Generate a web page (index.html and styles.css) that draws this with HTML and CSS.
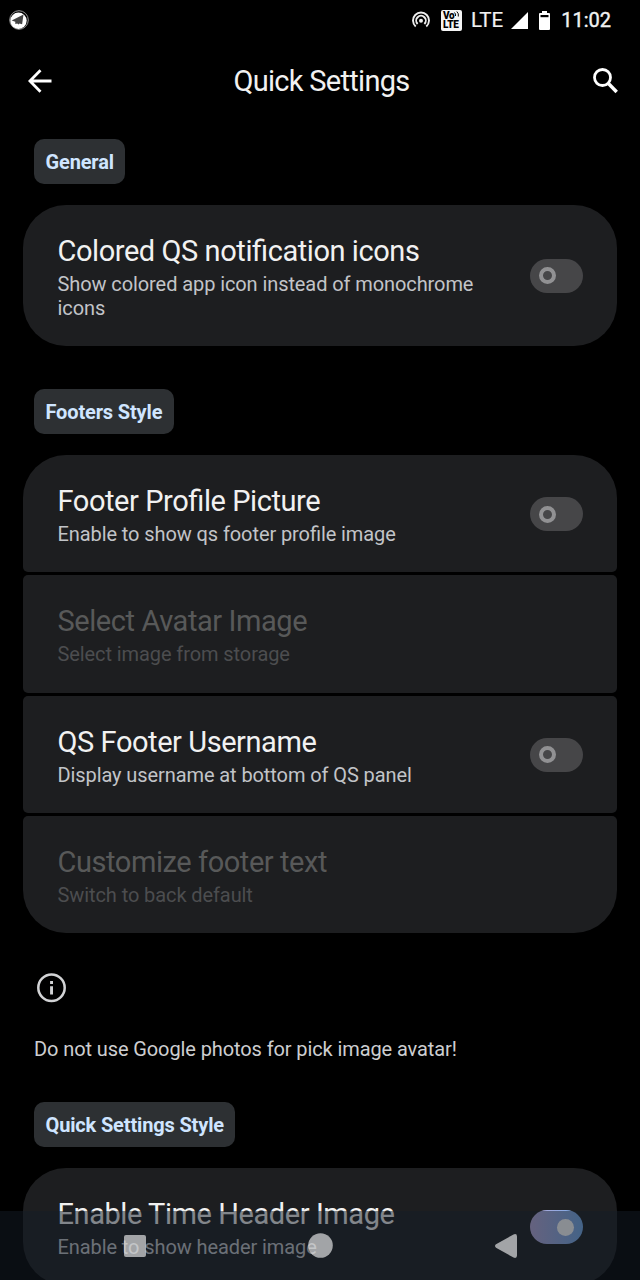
FILE: index.html
```html
<!DOCTYPE html>
<html lang="en">
<head>
<meta charset="utf-8">
<title>Quick Settings</title>
<link rel="stylesheet" href="styles.css">
</head>
<body>
<div class="screen">
  <header class="status">
    <svg class="status-app" width="20" height="20" viewBox="0 0 20 20"><circle cx="10" cy="10" r="9.3" fill="none" stroke="#999" stroke-width="1"/><circle cx="9.5" cy="10.7" r="8.200" fill="#fff"/><path d="M14.500 4.500 2.700 10.500l3.600 1.300v2.200l2-.6 1.200 1 1-1 2.600.8z" fill="#444"/></svg>
    <div class="status-right">
      <svg class="hotspot" width="18" height="18" viewBox="0 0 18 18" fill="none" stroke="#eee" stroke-width="1.9"><path d="M3.7 15.5A8 8 0 1 1 14.3 15.5M5.6 13a4.800 4.800 0 1 1 6.8 0"/><circle cx="9" cy="9.7" r="2" fill="#eee" stroke="none"/></svg>
      <span class="volte"><span class="vo">Vo<svg width="6" height="6" viewBox="0 0 6 6" fill="none" stroke="#000" stroke-width="1"><path d="M.5 1.5Q2 3 1.5 5M2.8.5Q5 2.500 4.300 5.500"/></svg></span><span class="lte">LTE</span></span>
      <span class="network">LTE</span>
      <svg class="signal" width="17" height="17" viewBox="0 0 17 17"><path d="M17 0v17H0z" fill="#fff"/></svg>
      <svg class="battery" width="11" height="19" viewBox="0 0 11 19"><path d="M3 0h5v2h2q1 0 1 1v15q0 1-1 1H1q-1 0-1-1V3q0-1 1-1h2z" fill="#fff"/><path d="M1.500 4h8v2.200h-8z" fill="#000"/></svg>
      <span class="clock">11:02</span>
    </div>
  </header>
  <nav class="appbar">
    <svg class="back" width="24" height="24" viewBox="0 0 24 24" fill="none" stroke="#fff" stroke-width="2.800"><path d="M23.500 12H2.500M12.500 1.300 1.900 12l10.600 10.700"/></svg>
    <h1 class="heading">Quick Settings</h1>
    <svg class="search" width="25" height="26" viewBox="0 0 25 26" fill="none" stroke="#fff"><circle cx="9.500" cy="9.500" r="8" stroke-width="2.800"/><path d="m15.200 15.200 8.500 8.800" stroke-width="3.400"/></svg>
  </nav>
  <main class="content">
    <h2 class="chip">General</h2>
    <section class="group">
      <div class="row row-tall">
        <div class="label"><div class="title">Colored QS notification icons</div><div class="summary">Show colored app icon instead of monochrome icons</div></div>
        <span class="switch"><span class="thumb"></span></span>
      </div>
    </section>
    <h2 class="chip">Footers Style</h2>
    <section class="group">
      <div class="row">
        <div class="label"><div class="title">Footer Profile Picture</div><div class="summary">Enable to show qs footer profile image</div></div>
        <span class="switch"><span class="thumb"></span></span>
      </div>
      <div class="row disabled">
        <div class="label"><div class="title">Select Avatar Image</div><div class="summary">Select image from storage</div></div>
      </div>
      <div class="row">
        <div class="label"><div class="title">QS Footer Username</div><div class="summary">Display username at bottom of QS panel</div></div>
        <span class="switch"><span class="thumb"></span></span>
      </div>
      <div class="row disabled">
        <div class="label"><div class="title">Customize footer text</div><div class="summary">Switch to back default</div></div>
      </div>
    </section>
    <div class="note">
      <svg class="info" width="30" height="30" viewBox="0 0 30 30"><circle cx="14.500" cy="14.800" r="13.200" fill="none" stroke="#d2d3d5" stroke-width="2.500"/><path d="M13.100 8.100h2.900v2.900h-2.900zM13.100 13.300h2.900v8.300h-2.900z" fill="#d2d3d5"/></svg>
      <p class="note-text">Do not use Google photos for pick image avatar!</p>
    </div>
    <h2 class="chip">Quick Settings Style</h2>
    <section class="group">
      <div class="row">
        <div class="label"><div class="title">Enable Time Header Image</div><div class="summary">Enable to show header image</div></div>
        <span class="switch switch-on"><span class="thumb"></span></span>
      </div>
    </section>
  </main>
  <footer class="navbar">
    <svg class="key" width="22" height="22" viewBox="0 0 22 22"><rect width="22" height="22" rx="2"/></svg>
    <svg class="key" width="25" height="25" viewBox="0 0 25 25"><circle cx="12.500" cy="12.500" r="12.300"/></svg>
    <svg class="key" width="22" height="24" viewBox="0 0 22 24"><path d="M1 10.300 18.500.4Q22-.8 22 2.500v19q0 3.300-3.500 2.100L1 13.700q-2-1.700 0-3.400z"/></svg>
  </footer>
</div>
</body>
</html>
```
FILE: styles.css
```css
* { box-sizing: border-box; }
body { margin: 0; background: #000; font-family: Roboto, "Liberation Sans", sans-serif; font-feature-settings: "liga" 1; }
.screen { position: relative; width: 640px; height: 1280px; overflow: hidden; background: #000; color: #f1f1f1; }
h1, h2, p { margin: 0; }
svg { display: block; flex: none; }
.status { display: flex; justify-content: space-between; align-items: center; height: 40px; padding: 0 29px 0 9px; }
.status-right { display: flex; align-items: center; }
.hotspot { margin-right: 11px; }
.volte { display: flex; flex-direction: column; width: 21px; height: 21px; border-radius: 2px; background: #f4f4f4; color: #000; font-size: 10px; line-height: 9px; font-weight: 900; padding: 1px 1px 0 2px; }
.vo { display: flex; height: 9px; letter-spacing: -0.5px; }
.lte { letter-spacing: -0.3px; }
.network { font-size: 20.5px; margin-left: 9px; -webkit-text-stroke: 0.2px; }
.signal { margin-left: 8px; }
.battery { margin-left: 11px; }
.clock { margin-left: 11px; font-size: 20px; -webkit-text-stroke: 0.4px; }
.appbar { display: flex; justify-content: space-between; align-items: center; height: 81px; padding: 0 22px 0 28px; }
.heading { margin-right: 2px; font-size: 29px; font-weight: 400; letter-spacing: -0.7px; }
.content { display: flex; flex-direction: column; align-items: flex-start; padding: 18px 23px 0; }
.chip { height: 45px; margin: 0 11px 21px; padding: 0 11.5px; border-radius: 10px; background: #2d3033; color: #cfe5ff; font-size: 20px; line-height: 47.5px; font-weight: 700; letter-spacing: -0.15px; white-space: nowrap; }
.group { display: flex; flex-direction: column; gap: 3px; width: 594px; margin-bottom: 43.500px; border-radius: 43px; overflow: hidden; }
.row { display: flex; align-items: center; height: 117.300px; padding: 0 34.500px; border-radius: 5px; background: #1d1e20; }
.row-tall { height: 140.500px; }
.label { flex: 1; padding: 2.6px 20px 0 0; }
.row-tall .label { padding-top: 4px; }
.title { font-size: 29px; line-height: 34px; letter-spacing: -0.43px; color: #f1f1f1; white-space: nowrap; }
.summary { font-size: 20px; line-height: 24px; margin-top: 4px; letter-spacing: -0.09px; color: #c2c4c8; }
.disabled .title { color: #585959; }
.disabled .summary { color: #4c4d4f; }
.switch { display: flex; align-items: center; width: 52.5px; height: 34px; margin-top: 1px; padding: 0 8.500px; border-radius: 17px; background: #464648; }
.thumb { width: 17px; height: 17px; border: 4px solid #919193; border-radius: 50%; }
.switch-on { justify-content: flex-end; background: linear-gradient(90deg, #b7a9d8, #74aae8); }
.switch-on .thumb { border: 0; background: #fff; }
.note { margin: -4px 0 0 11px; }
.info { margin-left: 2.5px; }
.note-text { margin: 34px 0 41.2px; font-size: 20px; line-height: 24px; letter-spacing: -0.1px; color: #cdced0; }
.navbar { position: absolute; left: 0; right: 0; bottom: 0; height: 69px; display: flex; align-items: center; justify-content: space-between; padding: 0 123px 0 124px; background: rgba(20, 28, 38, 0.5); }
.key { fill: rgba(255, 255, 255, 0.6); }
```
